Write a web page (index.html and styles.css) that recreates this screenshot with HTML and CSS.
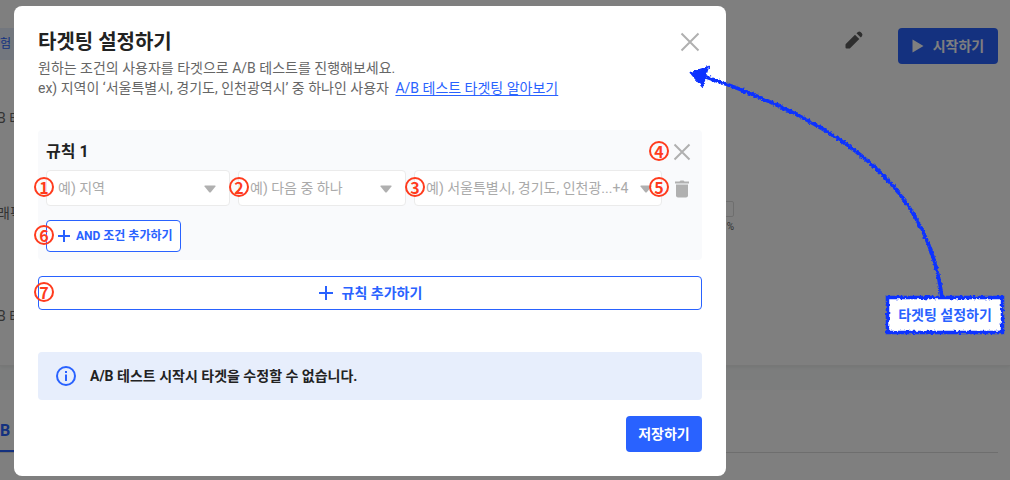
FILE: index.html
```html
<!DOCTYPE html>
<html lang="ko">
<head>
<meta charset="utf-8">
<title>타겟팅 설정하기</title>
<link rel="stylesheet" href="styles.css">
</head>
<body>
<div class="screen">
  <main class="page">
    <section class="summary">
      <header class="summary-head">
        <span class="chip">험</span>
        <div class="head-actions">
          <button class="icon-btn edit" type="button" aria-label="수정">
            <svg width="24" height="24" viewBox="0 0 24 24" fill="#5c5c5c"><path d="M3.500 16.700Q3.500 16.200 4 15.700L13 6.700L17.300 11L8.300 20Q7.800 20.500 7.300 20.500H4.500Q3.500 20.500 3.500 19.500Z"/><path d="M14.500 5.200L16 3.900Q17.500 3 18.800 4.200L19.800 5.200Q21 6.500 20.100 8L18.800 9.500Z"/></svg>
          </button>
          <button class="start" type="button">
            <svg width="12" height="14" viewBox="0 0 12 14" fill="#fff"><path d="M0.500 0.500L11.500 7L0.500 13.500Z"/></svg>
            시작하기
          </button>
        </div>
      </header>
      <p class="row">B 테</p>
      <div class="row traffic">
        <span class="traffic-label">래픽</span>
        <div class="traffic-value"><span class="value-box"></span><span class="unit">%</span></div>
      </div>
      <p class="row">B 테</p>
    </section>
    <section class="report">
      <nav class="tabs"><a class="tab" href="#report">B</a></nav>
    </section>
  </main>

  <div class="overlay">
    <div class="dialog" role="dialog" aria-labelledby="dialog-title">
      <header class="dialog-head">
        <h1 class="dialog-title" id="dialog-title">타겟팅 설정하기</h1>
        <button class="icon-btn" type="button" aria-label="닫기">
          <svg width="24" height="24" viewBox="0 0 24 24" stroke="#b0b0b0" stroke-width="2"><path d="M3.500 3.500L20.500 20.500M20.500 3.500L3.500 20.500"/></svg>
        </button>
      </header>
      <p class="lead">원하는 조건의 사용자를 타겟으로 A/B 테스트를 진행해보세요.<br>ex) 지역이 ‘서울특별시, 경기도, 인천광역시’ 중 하나인 사용자 <a class="link" href="#guide">A/B 테스트 타겟팅 알아보기</a></p>

      <section class="rule">
        <header class="rule-head">
          <h2 class="rule-title">규칙 1</h2>
          <div class="anchor">
            <button class="icon-btn" type="button" aria-label="규칙 닫기">
              <svg width="24" height="24" viewBox="0 0 24 24" stroke="#b0b0b0" stroke-width="2"><path d="M4.500 4.500L19.500 19.500M19.500 4.500L4.500 19.500"/></svg>
            </button>
            <span class="mark mark-side">4</span>
          </div>
        </header>
        <div class="fields">
          <div class="field field-target">
            <select class="select" aria-label="대상"><option>예) 지역</option></select>
            <svg class="caret" width="12" height="8" viewBox="0 0 12 8"><path d="M1 0.500H11Q12.200 0.500 11.500 1.500L7 7Q6 8 5 7L0.500 1.500Q-0.200 0.500 1 0.500Z"/></svg>
            <span class="mark mark-start">1</span>
          </div>
          <div class="field field-operator">
            <select class="select" aria-label="조건"><option>예) 다음 중 하나</option></select>
            <svg class="caret" width="12" height="8" viewBox="0 0 12 8"><path d="M1 0.500H11Q12.200 0.500 11.500 1.500L7 7Q6 8 5 7L0.500 1.500Q-0.200 0.500 1 0.500Z"/></svg>
            <span class="mark mark-field">2</span>
          </div>
          <div class="field field-values">
            <select class="select" aria-label="값"><option>예) 서울특별시, 경기도, 인천광...+4</option></select>
            <svg class="caret" width="12" height="8" viewBox="0 0 12 8"><path d="M1 0.500H11Q12.200 0.500 11.500 1.500L7 7Q6 8 5 7L0.500 1.500Q-0.200 0.500 1 0.500Z"/></svg>
            <span class="mark mark-field">3</span>
          </div>
          <div class="anchor">
            <button class="icon-btn" type="button" aria-label="조건 삭제">
              <svg width="24" height="24" viewBox="0 0 24 24" fill="#b0b0b0"><path d="M5 5.500H9.500L10.500 4.500H13.500L14.500 5.500H19V7.500H5Z"/><path d="M6 8.500H18V19.500Q18 21.500 16 21.500H8Q6 21.500 6 19.500Z"/></svg>
            </button>
            <span class="mark mark-side">5</span>
          </div>
        </div>
        <div class="anchor and-wrap">
          <button class="outline and" type="button">
            <svg width="12" height="12" viewBox="0 0 12 12" stroke="#2962ff" stroke-width="2"><path d="M6 0V12M0 6H12"/></svg>
            AND 조건 추가하기
          </button>
          <span class="mark mark-start">6</span>
        </div>
      </section>

      <div class="anchor">
        <button class="outline add" type="button">
          <svg width="16" height="16" viewBox="0 0 16 16" stroke="#2962ff" stroke-width="2"><path d="M8 1V15M1 8H15"/></svg>
          규칙 추가하기
        </button>
        <span class="mark mark-add">7</span>
      </div>

      <p class="notice">
        <svg width="20" height="20" viewBox="0 0 20 20" fill="none"><circle cx="10" cy="10" r="9" stroke="#2962ff" stroke-width="2"/><path d="M9 5H11V7H9ZM9 8.500H11V15H9Z" fill="#2962ff"/></svg>
        A/B 테스트 시작시 타겟을 수정할 수 없습니다.
      </p>
      <button class="save" type="button">저장하기</button>
    </div>
  </div>

  <svg class="arrow" width="330" height="310" viewBox="680 0 330 310">
    <filter id="rough" x="-5%" y="-5%" width="110%" height="110%"><feTurbulence type="fractalNoise" baseFrequency="0.35" numOctaves="2" seed="4"/><feDisplacementMap in="SourceGraphic" scale="4" xChannelSelector="R" yChannelSelector="G"/></filter>
    <g filter="url(#rough)" stroke="#0a32ff" stroke-width="3.600">
      <path d="M942 298C929 190 848 125 706 77" fill="none"/>
      <path d="M691 73L708 67L702 86Z" fill="#0a32ff" stroke-width="2"/>
    </g>
  </svg>
  <div class="callout">
    <svg class="callout-frame" width="120" height="40" viewBox="0 0 120 40"><rect x="2.500" y="2.500" width="115" height="35" fill="#fff" stroke="#0a32ff" stroke-width="3.500" filter="url(#rough)"/></svg>
    <button class="callout-btn" type="button">타겟팅 설정하기</button>
  </div>
</div>
</body>
</html>
```
FILE: styles.css
```css
* { box-sizing: border-box; }
body, h1, h2, p { margin: 0; }
body, button, select { font-family: Roboto, "Noto Sans CJK KR", sans-serif; font-size: 14px; line-height: 20px; }
button { border: 0; padding: 0; background: none; cursor: pointer; }
svg { display: block; flex: none; }

.screen { position: relative; min-height: 100vh; overflow: hidden; background: #f8fbfa; }

/* page under the dialog */
.summary { padding: 28px 12px 39px 0; background: #fff; border-bottom: 1px solid #eee; box-shadow: 0 1px 4px rgba(0, 0, 0, .08); }
.summary-head { display: flex; justify-content: space-between; align-items: flex-start; }
.chip { padding: 6px 20px 6px 0; background: #e7eefc; color: #2962ff; font-size: 12px; }
.head-actions { display: flex; gap: 32px; }
.start { display: flex; align-items: center; justify-content: center; gap: 9px; width: 100px; height: 36px; border-radius: 4px; background: #2962ff; color: #fff; font-weight: 700; }
.row { margin: 73px 0 0 -3px; color: #666; }
.summary-head + .row { margin-top: 44px; }
.traffic { display: flex; justify-content: space-between; padding-right: 264px; }
.traffic-label { line-height: 24px; }
.traffic-value { display: flex; flex-direction: column; align-items: flex-end; gap: 4px; }
.value-box { width: 40px; height: 16px; border: 1px solid #ddd; border-radius: 2px; }
.unit { font-size: 10px; line-height: 12px; }
.report { margin-top: 24px; padding: 30px 12px 30px 0; background: #fff; }
.tabs { display: flex; border-bottom: 1px solid #ddd; }
.tab { width: 60px; padding-bottom: 8px; border-bottom: 2px solid #2962ff; color: #2962ff; font-size: 16px; line-height: 22px; font-weight: 700; text-decoration: none; }

/* dialog */
.overlay { position: absolute; inset: 0; padding: 6px 284px 4px 14px; background: rgba(0, 0, 0, .5); }
.dialog { display: flex; flex-direction: column; padding: 24px; border-radius: 8px; background: #fff; color: #222; }
.dialog-head, .rule-head { display: flex; align-items: center; justify-content: space-between; }
.dialog-title { font-size: 20px; line-height: 24px; font-weight: 700; }
.icon-btn { display: block; width: 24px; height: 24px; }
.lead { margin-top: 4px; color: #666; }
.link { margin-left: 3px; color: #2962ff; text-decoration: underline; text-underline-offset: 2px; }
.rule { margin: 32px 0 16px; padding: 8px; border-radius: 4px; background: #f9fafc; }
.rule-head { height: 28px; }
.rule-title { font-size: 16px; line-height: 24px; font-weight: 700; }
.fields { display: flex; align-items: center; gap: 8px; margin-top: 4px; }
.field { position: relative; min-width: 0; }
.field-target { flex: 184 1 0; }
.field-operator { flex: 168 1 0; }
.field-values { flex: 248 1 0; }
.select { display: block; width: 100%; height: 36px; padding: 0 30px 0 11px; border: 1px solid #ebebeb; border-radius: 4px; background: #fff; color: #aaa; appearance: none; }
.field-values .select { padding-right: 22px; }
.caret { position: absolute; top: 15px; right: 14px; fill: #b0b0b0; pointer-events: none; }
.field-values .caret { right: 10px; }
.anchor { position: relative; }
.outline { display: flex; align-items: center; justify-content: center; border: 1px solid #2962ff; border-radius: 4px; background: #fff; color: #2962ff; font-weight: 700; }
.and-wrap { width: max-content; margin-top: 14px; }
.and { gap: 6px; height: 32px; padding: 0 7px 0 11px; font-size: 12px; }
.add { gap: 8px; width: 100%; height: 34px; }
.notice { display: flex; align-items: center; gap: 14px; margin: 42px 0 16px; padding: 14px 18px; border-radius: 4px; background: #e7eefc; font-weight: 700; }
.save { align-self: flex-end; width: 76px; height: 36px; border-radius: 4px; background: #2962ff; color: #fff; font-weight: 700; }

/* annotations */
.mark { position: absolute; width: 20px; height: 20px; border: 2px solid #ff3b1d; border-radius: 50%; color: #ff3b1d; font: 700 16px/16px "Noto Sans CJK KR", sans-serif; text-align: center; pointer-events: none; }
.mark-start { left: -12px; top: 7px; }
.and-wrap .mark-start { top: 5px; }
.mark-field { left: -9px; top: 7px; }
.mark-side { right: 25px; top: 1px; }
.mark-add { left: -4px; top: 6px; }
.arrow { position: absolute; top: 0; right: 0; pointer-events: none; }
.callout { position: absolute; top: 295px; right: 5px; width: 120px; height: 40px; }
.callout-btn { position: relative; width: 100%; height: 100%; color: #2962ff; font-weight: 700; }
.callout-frame { position: absolute; inset: 0; }
```
